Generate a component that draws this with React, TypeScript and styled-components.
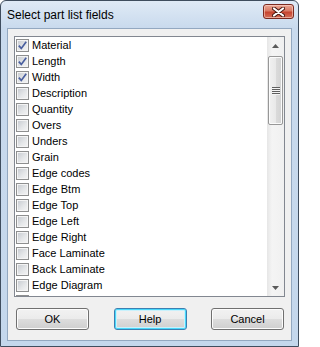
import React from 'react';
import styled, { createGlobalStyle } from 'styled-components';

const GlobalStyle = createGlobalStyle`
  html, body {
    margin: 0;
    padding: 0;
    background: #ffffff;
  }
  body {
    font-family: "Liberation Sans", Arial, sans-serif;
  }
`;

const Window = styled.div`
  width: 299px;
  height: 347px;
  box-sizing: border-box;
  border: 1px solid #3f4d5e;
  border-radius: 6px 6px 0 0;
  background: linear-gradient(#dfeaf6 0px, #c9daed 27px, #c4d7ec 100%);
  padding: 0 6px 5px;
  display: flex;
  flex-direction: column;
`;

const TitleBar = styled.div`
  height: 27px;
  flex: none;
  display: flex;
  align-items: center;
  position: relative;
`;

const Title = styled.span`
  font-size: 12px;
  color: #000000;
  margin-top: 1px;
`;

const CloseButton = styled.div`
  position: absolute;
  right: -2px;
  top: 3px;
  width: 31px;
  height: 15px;
  box-sizing: border-box;
  border: 1px solid #7b2a20;
  border-radius: 3px;
  background: linear-gradient(#eba794 0%, #d97b66 45%, #c7442f 55%, #d4705a 100%);
  box-shadow: inset 0 0 0 1px rgba(255, 220, 210, 0.55);
  display: flex;
  align-items: center;
  justify-content: center;
`;

const Client = styled.div`
  flex: 1;
  border: 1px solid #93a8c0;
  background: #f0f0f0;
  padding: 7px 6px 0;
  display: flex;
  flex-direction: column;
`;

const ListBox = styled.div`
  height: 261px;
  flex: none;
  box-sizing: border-box;
  border: 1px solid #828790;
  background: #ffffff;
  display: flex;
  overflow: hidden;
`;

const Items = styled.div`
  flex: 1;
  overflow: hidden;
  padding-left: 1px;
`;

const Row = styled.div`
  height: 16px;
  display: flex;
  align-items: center;
  font-size: 11px;
  color: #000000;
  white-space: nowrap;
`;

const Box = styled.span`
  width: 13px;
  height: 13px;
  box-sizing: border-box;
  flex: none;
  border: 1px solid #8e8f8f;
  background: linear-gradient(135deg, #c4c8ce 0%, #e4e6e8 55%, #f6f6f6 100%);
  box-shadow: inset 0 0 0 1px #f4f4f4;
  display: flex;
  align-items: center;
  justify-content: center;
  margin-right: 3px;
`;

const ScrollBar = styled.div`
  width: 17px;
  flex: none;
  display: flex;
  flex-direction: column;
  background: linear-gradient(90deg, #e6e6e6 0%, #f4f4f4 30%, #f0f0f0 100%);
`;

const ArrowButton = styled.div`
  height: 17px;
  flex: none;
  display: flex;
  align-items: center;
  justify-content: center;
`;

const Track = styled.div`
  flex: 1;
  padding: 2px 1px 0;
`;

const Thumb = styled.div`
  height: 69px;
  box-sizing: border-box;
  border: 1px solid #979797;
  border-radius: 2px;
  background: linear-gradient(90deg, #f1f1f1 0%, #e9e9e9 50%, #dbdbdb 51%, #d2d2d2 100%);
  box-shadow: inset 0 0 0 1px #fbfbfb;
  display: flex;
  align-items: center;
  justify-content: center;
`;

const ButtonRow = styled.div`
  margin-top: 11px;
  height: 22px;
  display: flex;
  justify-content: space-between;
  padding: 0 1px 0 2px;
`;

const Button = styled.div<{ $default?: boolean }>`
  width: 73px;
  height: 22px;
  box-sizing: border-box;
  border: 1px solid ${p => (p.$default ? '#3c7fb1' : '#707070')};
  border-radius: 3px;
  background: linear-gradient(#f2f2f2 0%, #ebebeb 50%, #dddddd 51%, #cfcfcf 100%);
  box-shadow: ${p =>
    p.$default ? 'inset 0 0 0 1px #48d8fb, inset 0 0 0 2px #c9f1fc' : 'inset 0 0 0 1px #fcfcfc'};
  display: flex;
  align-items: center;
  justify-content: center;
  font-size: 11px;
  color: #000000;
`;

const fields = [
  { name: 'Material', checked: true },
  { name: 'Length', checked: true },
  { name: 'Width', checked: true },
  { name: 'Description', checked: false },
  { name: 'Quantity', checked: false },
  { name: 'Overs', checked: false },
  { name: 'Unders', checked: false },
  { name: 'Grain', checked: false },
  { name: 'Edge codes', checked: false },
  { name: 'Edge Btm', checked: false },
  { name: 'Edge Top', checked: false },
  { name: 'Edge Left', checked: false },
  { name: 'Edge Right', checked: false },
  { name: 'Face Laminate', checked: false },
  { name: 'Back Laminate', checked: false },
  { name: 'Edge Diagram', checked: false },
  // next row is scrolled mostly out of view; only its box edge shows
  { name: '', checked: false },
];

function Check() {
  return (
    <svg width="9" height="9" viewBox="0 0 9 9">
      <path d="M0.8 4.6 L3.3 7.4 L8.2 0.8" fill="none" stroke="#4a5f9f" strokeWidth="1.7" />
    </svg>
  );
}

function Arrow({ down }: { down?: boolean }) {
  return (
    <svg width="7" height="4" viewBox="0 0 7 4">
      {down ? <path d="M0 0 H7 L3.5 4 Z" fill="#5a5a5a" /> : <path d="M0 4 H7 L3.5 0 Z" fill="#5a5a5a" />}
    </svg>
  );
}

function Grip() {
  return (
    <svg width="8" height="8" viewBox="0 0 8 8">
      {[0, 2, 4, 6].map(y => (
        <g key={y}>
          <rect x="0" y={y} width="8" height="1" fill="#5f5f5f" />
          <rect x="0" y={y + 1} width="8" height="1" fill="#f4f4f4" />
        </g>
      ))}
    </svg>
  );
}

function CloseGlyph() {
  return (
    <svg width="13" height="10" viewBox="0 0 13 10">
      <path d="M2 1.5 L11 8.5 M11 1.5 L2 8.5" stroke="#47170f" strokeWidth="4" strokeLinecap="round" />
      <path d="M2 1.5 L11 8.5 M11 1.5 L2 8.5" stroke="#ffffff" strokeWidth="2.2" strokeLinecap="round" />
    </svg>
  );
}

export default function App() {
  return (
    <>
      <GlobalStyle />
      <Window>
        <TitleBar>
          <Title>Select part list fields</Title>
          <CloseButton>
            <CloseGlyph />
          </CloseButton>
        </TitleBar>
        <Client>
          <ListBox>
            <Items>
              {fields.map((f, i) => (
                <Row key={i}>
                  <Box>{f.checked && <Check />}</Box>
                  {f.name}
                </Row>
              ))}
            </Items>
            <ScrollBar>
              <ArrowButton>
                <Arrow />
              </ArrowButton>
              <Track>
                <Thumb>
                  <Grip />
                </Thumb>
              </Track>
              <ArrowButton>
                <Arrow down />
              </ArrowButton>
            </ScrollBar>
          </ListBox>
          <ButtonRow>
            <Button>OK</Button>
            <Button $default>Help</Button>
            <Button>Cancel</Button>
          </ButtonRow>
        </Client>
      </Window>
    </>
  );
}
